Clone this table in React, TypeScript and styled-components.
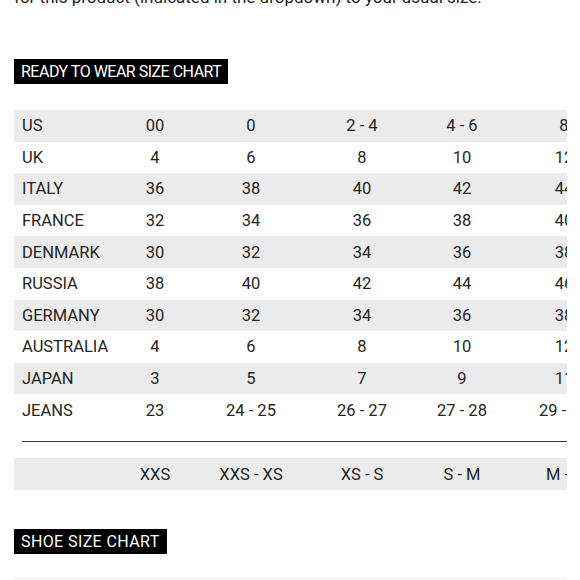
import React from 'react';
import styled, { createGlobalStyle } from 'styled-components';

const GlobalStyle = createGlobalStyle`
  html, body {
    margin: 0;
    padding: 0;
    background: #ffffff;
    overflow: hidden;
  }

  body {
    font-family: Roboto, "Liberation Sans", Arial, sans-serif;
    color: #222222;
  }
`;

const COLUMNS = '98px 86px 106px 116px 84px 120px';

const StyledSizeGuide = styled.div`
  width: 553px;
  padding-left: 14px;
  overflow: hidden;
`;

const Intro = styled.p`
  margin: -15px 0 0 0;
  font-size: 17px;
  line-height: 24px;
  white-space: nowrap;
  color: #222222;
`;

const ChartTitle = styled.h2<{ $top: number; $tracking: number }>`
  display: inline-block;
  margin: ${(props) => props.$top}px 0 0 0;
  padding: 0 7px 0 7px;
  height: 25px;
  line-height: 26px;
  background: #000000;
  color: #ffffff;
  font-size: 16px;
  font-weight: 400;
  letter-spacing: ${(props) => props.$tracking}px;
  white-space: nowrap;
`;

const Table = styled.div`
  display: flex;
  flex-direction: column;
  margin-top: 26px;
  overflow: hidden;
`;

const Row = styled.div<{ $shaded: boolean }>`
  display: grid;
  grid-template-columns: ${COLUMNS};
  align-items: center;
  height: 31.6px;
  background: ${(props) => (props.$shaded ? '#ebebeb' : 'transparent')};
  font-size: 16.5px;
  color: #252525;
`;

const Label = styled.div`
  padding-left: 8px;
  white-space: nowrap;
`;

const Cell = styled.div`
  text-align: center;
  white-space: nowrap;
`;

const Divider = styled.hr`
  margin: 15px 0 0 8px;
  border: none;
  height: 1.5px;
  background: #3a3a3a;
`;

const SizesRow = styled(Row)`
  margin-top: 16px;
  overflow: hidden;
`;

const BottomRule = styled.div`
  margin-top: 24px;
  height: 1px;
  background: #eeeeee;
`;

const chart: [string, string[]][] = [
  ['US', ['00', '0', '2 - 4', '4 - 6', '8']],
  ['UK', ['4', '6', '8', '10', '12']],
  ['ITALY', ['36', '38', '40', '42', '44']],
  ['FRANCE', ['32', '34', '36', '38', '40']],
  ['DENMARK', ['30', '32', '34', '36', '38']],
  ['RUSSIA', ['38', '40', '42', '44', '46']],
  ['GERMANY', ['30', '32', '34', '36', '38']],
  ['AUSTRALIA', ['4', '6', '8', '10', '12']],
  ['JAPAN', ['3', '5', '7', '9', '11']],
  ['JEANS', ['23', '24 - 25', '26 - 27', '27 - 28', '29 - 30']],
];

const sizes = ['XXS', 'XXS - XS', 'XS - S', 'S - M', 'M - L'];

const App = () => {
  return (
    <>
      <GlobalStyle />
      <StyledSizeGuide>
        <Intro>for this product (indicated in the dropdown) to your usual size.</Intro>

        <ChartTitle $top={50} $tracking={-0.5}>
          READY TO WEAR SIZE CHART
        </ChartTitle>

        <Table>
          {chart.map(([country, values], i) => (
            <Row key={country} $shaded={i % 2 === 0}>
              <Label>{country}</Label>
              {values.map((value, j) => (
                <Cell key={j}>{value}</Cell>
              ))}
            </Row>
          ))}
        </Table>

        <Divider />

        <SizesRow $shaded>
          <Label></Label>
          {sizes.map((size) => (
            <Cell key={size}>{size}</Cell>
          ))}
        </SizesRow>

        <div>
          <ChartTitle $top={39} $tracking={0.4}>
            SHOE SIZE CHART
          </ChartTitle>
        </div>

        <BottomRule />
      </StyledSizeGuide>
    </>
  );
};

export default App;
